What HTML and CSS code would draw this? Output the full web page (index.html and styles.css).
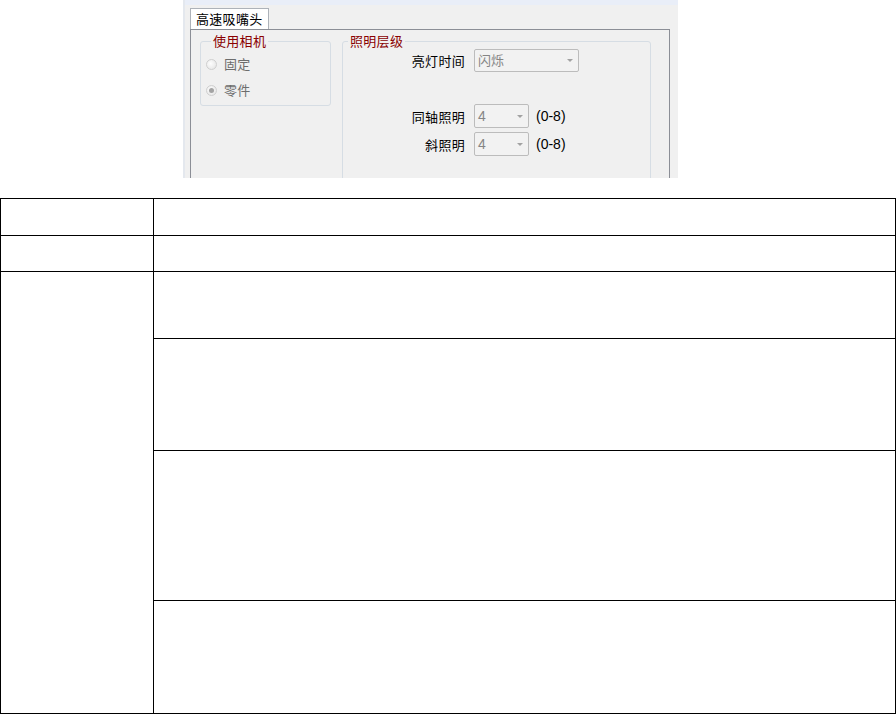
FILE: index.html
```html
<!DOCTYPE html>
<html lang="zh-CN">
<head>
    <meta charset="UTF-8">
    <meta name="viewport" content="width=device-width, initial-scale=1.0">
    <title>高速吸嘴头 - 照明设置</title>
    <link rel="stylesheet" href="styles.css">
</head>
<body>

<div class="shot">
    <div class="title-strip"></div>
    <div class="tab-row">
        <div class="tab">高速吸嘴头</div>
    </div>
    <div class="tab-panel">
        <fieldset class="group group-camera">
            <legend>使用相机</legend>
            <div class="radio-row">
                <span class="radio"></span>
                <span class="radio-label">固定</span>
            </div>
            <div class="radio-row">
                <span class="radio checked"></span>
                <span class="radio-label">零件</span>
            </div>
        </fieldset>

        <fieldset class="group group-light">
            <legend>照明层级</legend>
            <div class="field-row row-time">
                <label class="field-label">亮灯时间</label>
                <div class="combo combo-wide">闪烁<span class="arrow"></span></div>
            </div>
            <div class="field-row row-coax">
                <label class="field-label">同轴照明</label>
                <div class="combo">4<span class="arrow"></span></div>
                <span class="range">(0-8)</span>
            </div>
            <div class="field-row row-oblique">
                <label class="field-label">斜照明</label>
                <div class="combo">4<span class="arrow"></span></div>
                <span class="range">(0-8)</span>
            </div>
        </fieldset>
    </div>
</div>

<table class="spec-table">
    <tr class="r1"><td class="col-name"></td><td></td></tr>
    <tr class="r2"><td class="col-name"></td><td></td></tr>
    <tr class="r3"><td class="col-name" rowspan="4"></td><td></td></tr>
    <tr class="r4"><td></td></tr>
    <tr class="r5"><td></td></tr>
    <tr class="r6"><td></td></tr>
</table>

</body>
</html>
```

FILE: styles.css
```css
body {
    margin: 0;
    padding: 0;
    background-color: #fff;
    font-family: "Liberation Sans", "Noto Sans CJK SC", sans-serif;
    font-size: 13px;
}

.shot {
    width: 493px;
    height: 178px;
    margin-left: 183px;
    background-color: #f0f0f0;
    border-left: 2px solid #e4e8ee;
    overflow: hidden;
}

.title-strip {
    height: 5px;
    background-color: #e9eef8;
}

.tab-row {
    display: flex;
    padding-left: 5px;
    margin-top: 3px;
}

.tab {
    height: 20px;
    line-height: 20px;
    padding: 0 5px 0 5px;
    background-color: #fff;
    border: 1px solid #adb2b9;
    border-bottom: none;
    color: #000;
    font-family: "Noto Sans CJK SC", sans-serif;
    letter-spacing: 0.3px;
}

.tab-panel {
    display: flex;
    gap: 11px;
    align-items: flex-start;
    width: 480px;
    height: 160px;
    margin-left: 5px;
    padding: 3px 0 0 9px;
    box-sizing: border-box;
    border: 1px solid #8b8e96;
    border-bottom: none;
}

.group {
    margin: 0;
    border: 1px solid #d6dde4;
    border-radius: 3px;
    box-sizing: border-box;
}

.group legend {
    margin-left: 5px;
    padding: 0 2px;
    line-height: 16px;
    color: #8a0000;
    font-family: "Noto Sans CJK SC", sans-serif;
    letter-spacing: 0.3px;
}

.group-camera {
    width: 131px;
    height: 73px;
    padding: 2px 0 0 5px;
}

.radio-row {
    display: flex;
    align-items: center;
    gap: 7px;
    height: 26px;
}

.radio {
    width: 9px;
    height: 9px;
    border: 1px solid #cfcfcf;
    border-radius: 50%;
    background: radial-gradient(circle at 40% 40%, #fdfdfd, #e2e2e2);
    position: relative;
}

.radio.checked::after {
    content: "";
    position: absolute;
    left: 2px;
    top: 2px;
    width: 5px;
    height: 5px;
    border-radius: 50%;
    background-color: #a3a3a3;
}

.radio-label {
    color: #6d6d6d;
    font-family: "Noto Sans CJK SC", sans-serif;
    line-height: 16px;
    letter-spacing: 0.3px;
}

.group-light {
    width: 309px;
    height: 160px;
    padding: 0;
}

.field-row {
    display: flex;
    align-items: center;
    height: 24px;
}

.row-time {
    margin-top: -1px;
}

.row-coax {
    margin-top: 32px;
}

.row-oblique {
    margin-top: 4px;
}

.field-label {
    width: 122px;
    text-align: right;
    margin-right: 9px;
    color: #000;
    font-family: "Noto Sans CJK SC", sans-serif;
    letter-spacing: 0.3px;
}

.combo {
    position: relative;
    width: 55px;
    height: 24px;
    line-height: 22px;
    padding-left: 3px;
    box-sizing: border-box;
    border: 1px solid #bcbcbc;
    border-radius: 2px;
    background-color: #f2f2f2;
    color: #858585;
    font-family: "Liberation Sans", "Noto Sans CJK SC", sans-serif;
    font-size: 14px;
}

.combo-wide {
    width: 105px;
    height: 23px;
    line-height: 21px;
    font-size: 13px;
}

.arrow {
    position: absolute;
    right: 5px;
    top: 50%;
    margin-top: -1px;
    border-left: 3px solid transparent;
    border-right: 3px solid transparent;
    border-top: 3px solid #a2a2a2;
}

.range {
    margin-left: 7px;
    color: #000;
    font-size: 14px;
}

.spec-table {
    width: 896px;
    margin-top: 20px;
    border-collapse: collapse;
}

.spec-table td {
    border: 1px solid #000;
    padding: 0;
}

.spec-table .col-name {
    width: 152px;
}

.r1 { height: 37px; }
.r2 { height: 36px; }
.r3 { height: 67px; }
.r4 { height: 112px; }
.r5 { height: 150px; }
.r6 { height: 113px; }
```
